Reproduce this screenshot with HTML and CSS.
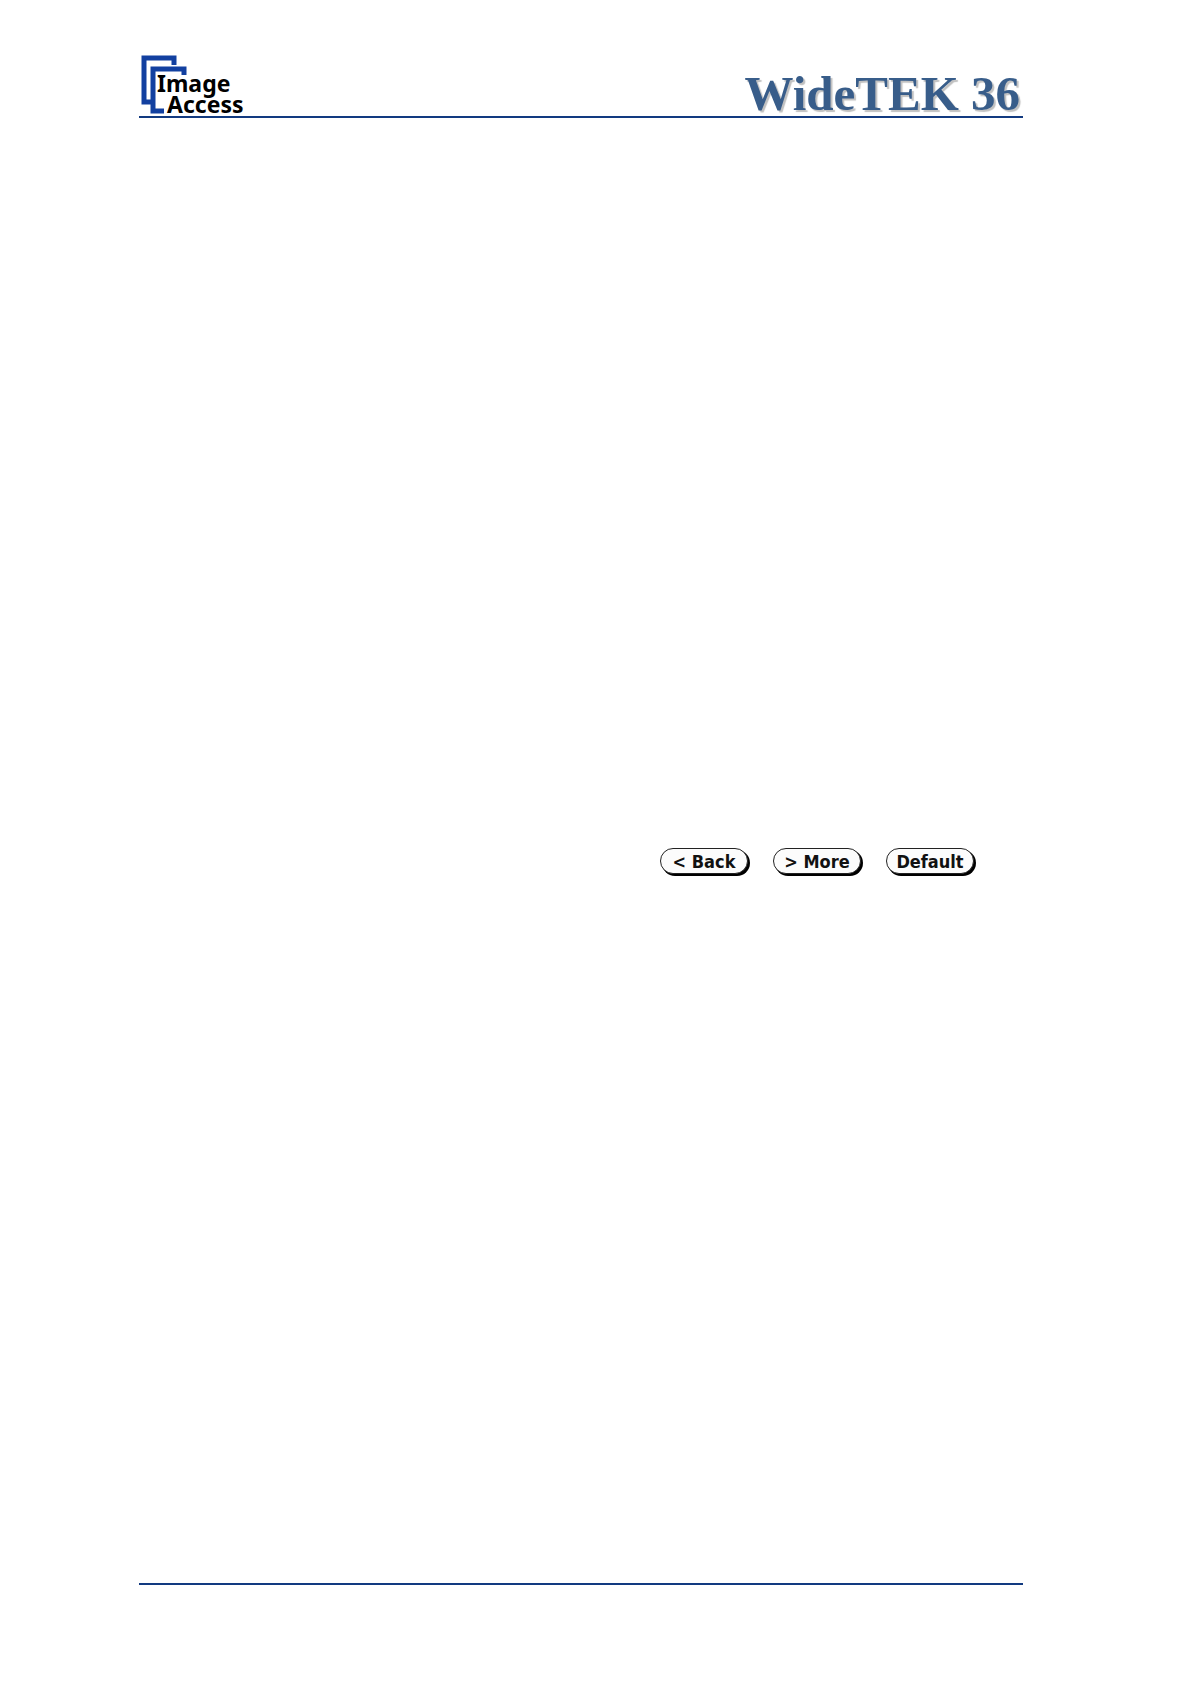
FILE: index.html
```html
<!DOCTYPE html>
<html lang="en">
<head>
  <meta charset="UTF-8">
  <meta name="viewport" content="width=device-width, initial-scale=1.0">
  <title>WideTEK 36</title>
  <link rel="stylesheet" href="styles.css">
</head>
<body>
  <header class="page-header">
    <svg class="logo" viewBox="0 0 112 64" role="img" aria-label="Image Access">
      <path class="logo-frame" d="M35 13V6H5V50H12" />
      <path class="logo-frame" d="M45 23V17H14V59H25" />
      <text class="logo-text" x="18" y="40">Image</text>
      <text class="logo-text" x="28" y="61">Access</text>
    </svg>
    <h1 class="product">WideTEK 36</h1>
  </header>

  <main class="content">
    <div class="buttons">
      <button type="button" class="lcd-button">&lt; Back</button>
      <button type="button" class="lcd-button">&gt; More</button>
      <button type="button" class="lcd-button">Default</button>
    </div>
  </main>

  <footer class="page-footer"></footer>
</body>
</html>
```

FILE: styles.css
```css
* {
  box-sizing: border-box;
}

body {
  display: flex;
  flex-direction: column;
  min-height: 100vh;
  margin: 0;
  padding: 52px 168px 0 139px;
  background-color: #fff;
  font-family: "Liberation Sans", Arial, sans-serif;
}

.page-header {
  display: flex;
  justify-content: space-between;
  align-items: flex-end;
  border-bottom: 2px solid #123a80;
}

.logo {
  width: 112px;
  height: 64px;
  overflow: visible;
}

.logo-frame {
  fill: none;
  stroke: #1240a0;
  stroke-width: 5;
}

.logo-text {
  font-family: "Noto Sans", sans-serif;
  font-size: 23px;
  font-weight: bold;
  fill: #000;
}

.product {
  margin: 0 3px 0 0;
  color: #385d8a;
  font-family: "Liberation Serif", "Times New Roman", serif;
  font-size: 49px;
  line-height: 44px;
  text-shadow: 2px 2px 1px #c0c0c0;
}

.content {
  flex: 1;
  padding: 730px 49px 0 0;
}

.buttons {
  display: flex;
  justify-content: flex-end;
  gap: 25px;
}

/* rounded keys with a hard shadow, like on the LCD panel */
.lcd-button {
  width: 88px;
  height: 26px;
  padding: 2px 0 0;
  border: 1px solid #222;
  border-radius: 13px;
  background-color: #fcfcfc;
  box-shadow: 2px 2px 0 #000;
  color: #111;
  font-family: "DejaVu Sans Condensed", "DejaVu Sans", sans-serif;
  font-size: 18px;
  font-weight: bold;
  line-height: 22px;
  white-space: nowrap;
}

.page-footer {
  height: 101px;
  border-top: 2px solid #123a80;
}
```
